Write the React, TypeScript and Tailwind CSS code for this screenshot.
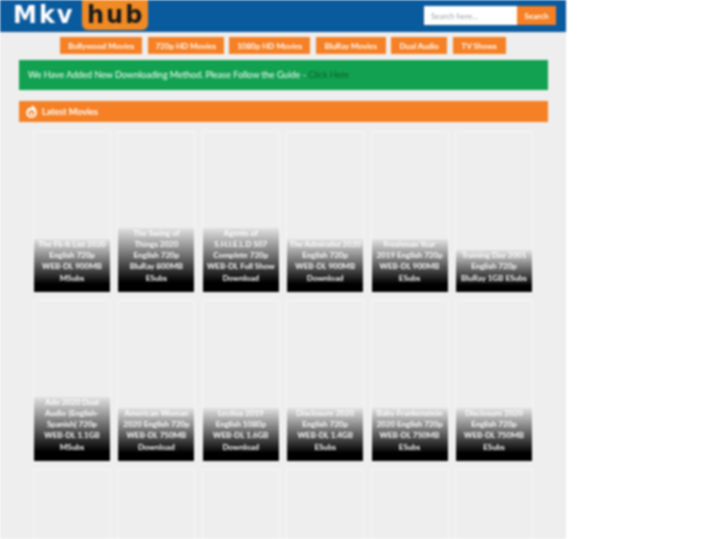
const navLinks = [
  { label: 'Bollywood Movies', width: 'w-[82px]' },
  { label: '720p HD Movies', width: 'w-[76px]' },
  { label: '1080p HD Movies', width: 'w-[81px]' },
  { label: 'BluRay Movies', width: 'w-[70px]' },
  { label: 'Dual Audio', width: 'w-[56px]' },
  { label: 'TV Shows', width: 'w-[53px]' },
];

const movies = [
  ['The Fk-It List 2020', 'English 720p', 'WEB-DL 900MB', 'MSubs'],
  ['The Swing of', 'Things 2020', 'English 720p', 'BluRay 800MB', 'ESubs'],
  ['Agents of', 'S.H.I.E.L.D S07', 'Complete 720p', 'WEB-DL Full Show', 'Download'],
  ['The Admiralist 2020', 'English 720p', 'WEB-DL 900MB', 'Download'],
  ['Freshman Year', '2019 English 720p', 'WEB-DL 900MB', 'ESubs'],
  ['Training Day 2001', 'English 720p', 'BluRay 1GB ESubs'],
  ['Ado 2020 Dual', 'Audio [English-', 'Spanish] 720p', 'WEB-DL 1.1GB', 'MSubs'],
  ['American Woman', '2020 English 720p', 'WEB-DL 750MB', 'Download'],
  ['Lectius 2019', 'English 1080p', 'WEB-DL 1.6GB', 'Download'],
  ['Disclosure 2020', 'English 720p', 'WEB-DL 1.4GB', 'ESubs'],
  ['Baby Frankenstein', '2020 English 720p', 'WEB-DL 750MB', 'ESubs'],
  ['Disclosure 2020', 'English 720p', 'WEB-DL 750MB', 'ESubs'],
  [],
  [],
  [],
  [],
  [],
  [],
];

function MovieCard({ lines }: { lines: string[] }) {
  return (
    <div className="flex h-[162px] flex-col justify-end border border-[#f6f6f6] bg-[#eeeeee]">
      {lines.length > 0 && (
        <div className="bg-gradient-to-b from-black/5 to-black to-85% pb-2 text-center text-[8px] leading-[11.3px] font-bold whitespace-nowrap text-white">
          {lines.map((line) => (
            <div key={line}>{line}</div>
          ))}
        </div>
      )}
    </div>
  );
}

export default function App() {
  return (
    <div className="h-[539px] w-[720px] overflow-hidden bg-white font-['Lato',sans-serif] blur-[0.85px]">
      <div className="h-[539px] w-[566px] bg-[#eeeeee]">
        {/* Header */}
        <header className="flex h-[32px] items-start justify-between bg-[#0a5a9e] pr-[10px] pl-[13px]">
          <div className="flex items-start font-['DejaVu_Sans',sans-serif] font-bold">
            <span className="w-[69px] text-[24px] leading-[30px] tracking-[2px] text-white">Mkv</span>
            <span className="h-[30px] w-[66px] rounded-b-[6px] bg-[#f08a24] pl-[5px] text-[24px] leading-[30px] tracking-[2px] text-[#1a1a1a]">hub</span>
          </div>
          <div className="mt-[6px] flex h-[19px] text-[8px]">
            <div className="flex w-[93px] items-center bg-white pl-[7px] text-[#9aa0a6]">Search here...</div>
            <div className="flex w-[39px] items-center justify-center bg-[#f58025] font-bold text-white">Search</div>
          </div>
        </header>

        {/* Nav */}
        <nav className="mt-[5px] flex justify-center gap-[5.5px]">
          {navLinks.map((link) => (
            <a
              key={link.label}
              className={`flex h-[17px] items-center justify-center bg-[#f58025] text-[8px] font-bold text-white ${link.width}`}
            >
              {link.label}
            </a>
          ))}
        </nav>

        <div className="pr-[18px] pl-[19px]">
          <div className="mt-[6px] flex h-[30px] items-center bg-[#12a150] pb-[1px] pl-[9px] text-[9px] text-white">
            We Have Added New Downloading Method. Please Follow the Guide -&nbsp;
            <span className="text-[#0b5c2e]">Click Here</span>
          </div>

          <div className="mt-[11px] flex h-[21px] items-center gap-[5px] bg-[#f58025] pl-[7px] text-[9px] font-bold text-white">
            <svg width="11" height="13" viewBox="0 0 11 13">
              <path d="M6 0c.6 2-.6 3-1.600 2.200C4.200 3 3.600 3.200 2.800 3 1.200 4.300.2 6 .2 7.800.2 10.700 2.600 13 5.500 13s5.300-2.300 5.300-5.200C10.800 4.500 8.700 1.500 6 0z" fill="#fff" />
              <circle cx="5.500" cy="8.300" r="3" fill="#f58025" />
              <circle cx="5.500" cy="8.800" r="1.500" fill="#fff" />
            </svg>
            Latest Movies
          </div>
        </div>

        {/* Movie grid */}
        <div className="mt-[9px] grid grid-cols-6 gap-x-[6.4px] gap-y-[7px] px-[33px]">
          {movies.map((lines, i) => (
            <MovieCard key={i} lines={lines} />
          ))}
        </div>
      </div>
    </div>
  );
}
